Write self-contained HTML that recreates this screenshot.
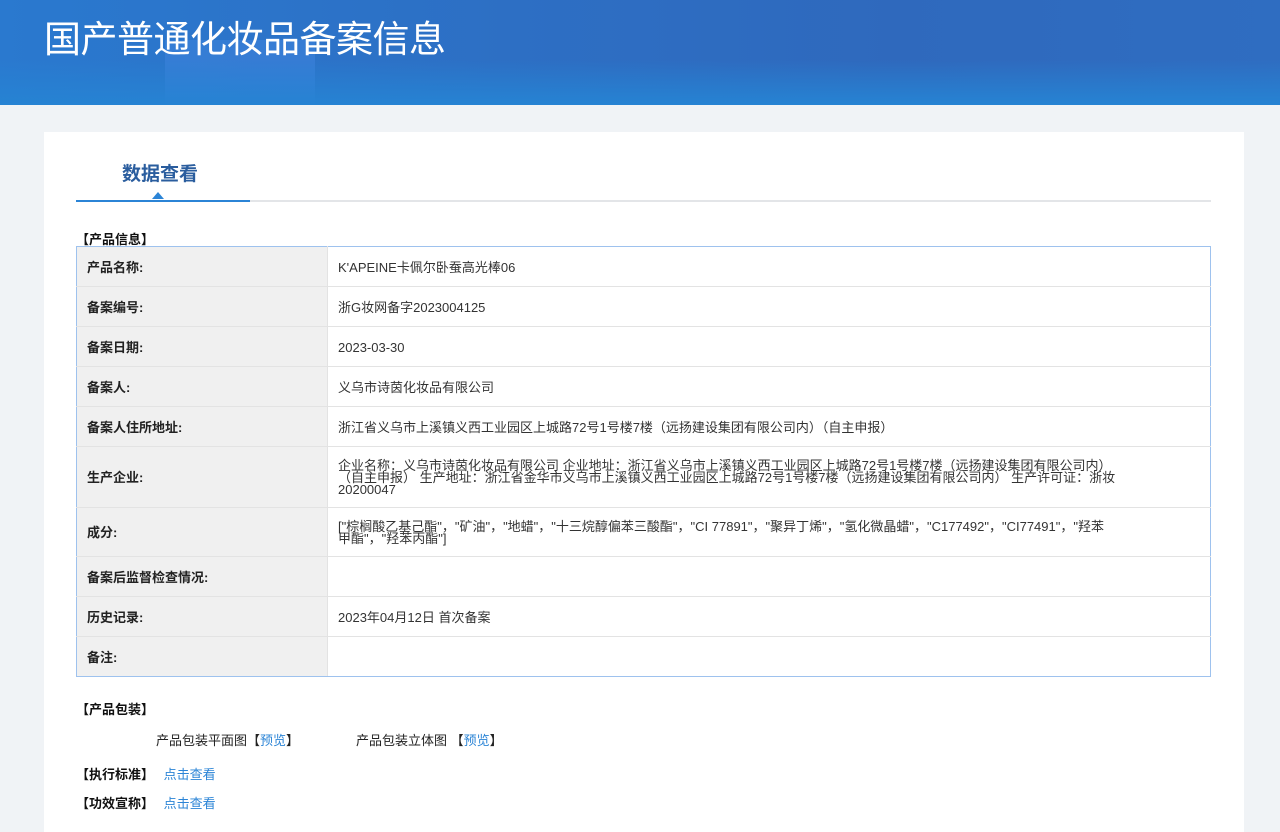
<!DOCTYPE html>
<html><head><meta charset="utf-8"><style>
body{margin:0;width:1280px;height:826px;overflow:hidden;background:#f0f3f6;font-family:"Liberation Sans","Noto Sans CJK SC",sans-serif;color:#333}
.hd{height:105px;background:linear-gradient(90deg,#2a79cf 0%,#2d6fc4 40%,#2f69bd 70%,#2f6dc1 100%);position:relative;overflow:hidden}
.hd:before{content:"";position:absolute;left:165px;top:40px;width:150px;height:70px;background:#3a80d8;opacity:.7}
.hd:after{content:"";position:absolute;left:0;right:0;bottom:0;height:45px;background:linear-gradient(180deg,rgba(39,130,210,0),#2683d3)}
.hd h1{position:absolute;left:44px;top:9px;margin:0;font-size:37px;font-weight:normal;color:#fff;z-index:2;letter-spacing:-0.5px}
.card{position:absolute;left:44px;top:132px;width:1200px;height:700px;background:#fff}
.tab{position:absolute;left:32px;top:68px;width:1135px;height:2px;background:#e3e5e8}
.tab i{position:absolute;left:0;top:0;width:174px;height:2px;background:#2b84d6}
.tab b{position:absolute;left:76px;top:-8px;border:6px solid transparent;border-bottom:7px solid #2b84d6;border-top:0}
.tt{position:absolute;left:78px;top:27px;font-size:19px;font-weight:bold;color:#2a5d9e}
.sec{position:absolute;font-size:13px;font-weight:bold;color:#111}
table{position:absolute;left:32px;top:114px;width:1135px;border-collapse:collapse;font-size:13px;border:1px solid #9ec2ee}
td{border:1px solid #e3e3e3;height:37px;padding:2px 10px 0;line-height:12px;color:#333}
tr:first-child td{border-top-color:#9ec2ee}
tr:last-child td{border-bottom-color:#9ec2ee}
td:first-child{border-left-color:#9ec2ee}
td:last-child{border-right-color:#9ec2ee}
td.l{width:230px;background:#f0f0f0;font-weight:bold;color:#222}
a{color:#2b84d6;text-decoration:none}
.p{position:absolute;font-size:13px;color:#222}
</style></head><body>
<div class="hd"><h1>国产普通化妆品备案信息</h1></div>
<div class="card">
<div class="tt">数据查看</div>
<div class="tab"><i></i><b></b></div>
<div class="sec" style="left:32px;top:97px">【产品信息】</div>
<table>
<tr><td class="l">产品名称:</td><td>K'APEINE卡佩尔卧蚕高光棒06</td></tr>
<tr><td class="l">备案编号:</td><td>浙G妆网备字2023004125</td></tr>
<tr><td class="l">备案日期:</td><td>2023-03-30</td></tr>
<tr><td class="l">备案人:</td><td>义乌市诗茵化妆品有限公司</td></tr>
<tr><td class="l">备案人住所地址:</td><td>浙江省义乌市上溪镇义西工业园区上城路72号1号楼7楼（远扬建设集团有限公司内）（自主申报）</td></tr>
<tr><td class="l" style="height:58px">生产企业:</td><td>企业名称：义乌市诗茵化妆品有限公司 企业地址：浙江省义乌市上溪镇义西工业园区上城路72号1号楼7楼（远扬建设集团有限公司内）<br>（自主申报） 生产地址：浙江省金华市义乌市上溪镇义西工业园区上城路72号1号楼7楼（远扬建设集团有限公司内） 生产许可证：浙妆<br>20200047</td></tr>
<tr><td class="l" style="height:46px">成分:</td><td>["棕榈酸乙基己酯"，"矿油"，"地蜡"，"十三烷醇偏苯三酸酯"，"CI 77891"，"聚异丁烯"，"氢化微晶蜡"，"C177492"，"CI77491"，"羟苯<br>甲酯"，"羟苯丙酯"]</td></tr>
<tr><td class="l">备案后监督检查情况:</td><td></td></tr>
<tr><td class="l">历史记录:</td><td>2023年04月12日 首次备案</td></tr>
<tr><td class="l">备注:</td><td></td></tr>
</table>
<div class="sec" style="left:32px;top:567px">【产品包装】</div>
<div class="p" style="left:112px;top:598px">产品包装平面图【<a>预览</a>】</div>
<div class="p" style="left:312px;top:598px">产品包装立体图 【<a>预览</a>】</div>
<div class="sec" style="left:32px;top:632px">【执行标准】 <a style="font-weight:normal;margin-left:6px">点击查看</a></div>
<div class="sec" style="left:32px;top:661px">【功效宣称】 <a style="font-weight:normal;margin-left:6px">点击查看</a></div>
</div>
</body></html>
